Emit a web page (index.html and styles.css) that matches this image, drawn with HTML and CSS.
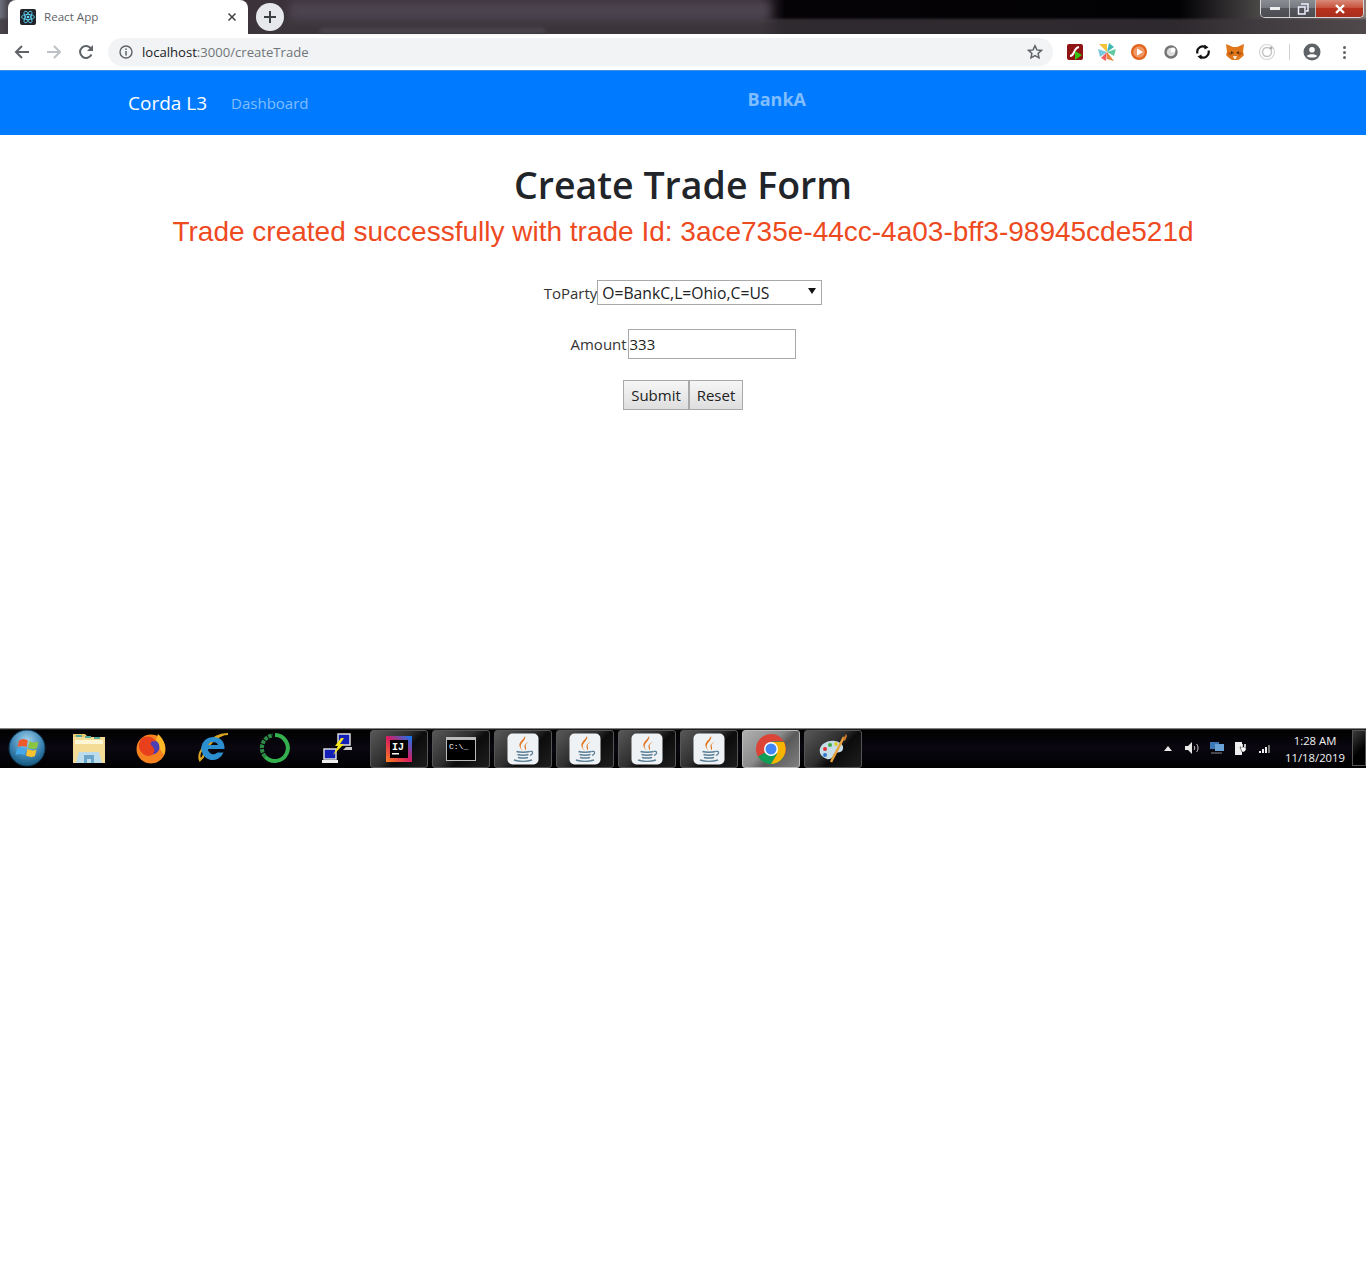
FILE: index.html
```html
<!DOCTYPE html>
<html>
<head>
    <title>React App</title>
    <link rel="stylesheet" href="styles.css">
</head>
<body>
    <svg class="defs" width="0" height="0">
        <symbol id="java" viewBox="0 0 32 32">
            <rect x=".5" y=".5" width="31" height="31" rx="5" fill="#eef2f5"/>
            <path d="M18 3c2 4-6 7-4 12 .6 1.300 1.500 2.500 2 3-3-3-5-6-2.500-9C15 7 17 5.500 18 3z" fill="#e2731c"/>
            <path d="M22 8.500c-3 1.500-5 3-4.500 5.500.3 1.300 1 2 .8 3.500 2-2-.5-4.500.5-6 .6-1 2-2 3.200-3z" fill="#e2731c"/>
            <path d="M9.500 18.500c3 1 10 1 13 0M10.500 21.500c3 .8 8 .8 11 0M11 24.500c3 .7 7 .7 10 0" fill="none" stroke="#5a7f96" stroke-width="1.500"/>
            <path d="M22.500 18.500c3.500-1 4.500 2 .5 4" fill="none" stroke="#5a7f96" stroke-width="1.200"/>
            <path d="M7 27c5 1.800 13 1.800 18 0" fill="none" stroke="#5a7f96" stroke-width="1.400"/>
        </symbol>
    </svg>

    <header class="chrome">
        <div class="tabstrip">
            <div class="blur-title"></div>
            <div class="blur-menu"></div>
            <div class="tab">
                <svg class="favicon" width="16" height="16" viewBox="0 0 16 16">
                    <rect width="16" height="16" rx="2" fill="#20232a"/>
                    <g fill="none" stroke="#61dafb" stroke-width=".8">
                        <ellipse cx="8" cy="8" rx="6.500" ry="2.600"/>
                        <ellipse cx="8" cy="8" rx="6.500" ry="2.600" transform="rotate(60 8 8)"/>
                        <ellipse cx="8" cy="8" rx="6.500" ry="2.600" transform="rotate(120 8 8)"/>
                    </g>
                    <circle cx="8" cy="8" r="1.300" fill="#61dafb"/>
                </svg>
                <span class="tab-title">React App</span>
                <svg class="tab-close" width="10" height="10" viewBox="0 0 10 10">
                    <path d="M1.500 1.500l7 7M8.500 1.500l-7 7" stroke="#3c4043" stroke-width="1.500"/>
                </svg>
            </div>
            <div class="new-tab">
                <svg width="14" height="14" viewBox="0 0 14 14">
                    <path d="M7 1v12M1 7h12" stroke="#3c4043" stroke-width="2"/>
                </svg>
            </div>
            <div class="win-controls">
                <div class="win-btn win-min"><span></span></div>
                <div class="win-btn win-max"><svg width="12" height="12" viewBox="0 0 12 12"><path d="M4 1h7v7H9M1.500 4h6.500v7H1.500z" fill="none" stroke="#eef" stroke-width="1.500"/></svg></div>
                <div class="win-btn win-close"><svg width="12" height="10" viewBox="0 0 12 10"><path d="M2 1l8 8M10 1l-8 8" stroke="#fff" stroke-width="2.400"/></svg></div>
            </div>
        </div>

        <div class="toolbar">
            <div class="nav-btns">
                <svg width="16" height="16" viewBox="0 0 16 16"><path d="M15 8H2M8 2L2 8l6 6" fill="none" stroke="#5f6368" stroke-width="2"/></svg>
                <svg width="16" height="16" viewBox="0 0 16 16"><path d="M1 8h13M8 2l6 6-6 6" fill="none" stroke="#bdc1c6" stroke-width="2"/></svg>
                <svg width="16" height="16" viewBox="0 0 16 16"><path d="M13.500 10.500A6 6 0 1 1 13 4.500" fill="none" stroke="#5f6368" stroke-width="2"/><path d="M15 1v6H9z" fill="#5f6368"/></svg>
            </div>
            <div class="omnibox">
                <svg width="14" height="14" viewBox="0 0 14 14">
                    <circle cx="7" cy="7" r="6" fill="none" stroke="#5f6368" stroke-width="1.400"/>
                    <path d="M7 6v4.500M7 3.500v1.500" stroke="#5f6368" stroke-width="1.500"/>
                </svg>
                <span class="url"><span class="url-host">localhost</span>:3000/createTrade</span>
                <svg class="star" width="16" height="16" viewBox="0 0 16 16">
                    <path d="M8 1.800l1.900 4.100 4.500.5-3.300 3 .9 4.500L8 11.700l-4 2.200.9-4.500-3.300-3 4.500-.5z" fill="none" stroke="#5f6368" stroke-width="1.500"/>
                </svg>
            </div>
            <div class="extensions">
                <svg width="16" height="16" viewBox="0 0 16 16">
                    <rect width="16" height="16" rx="2" fill="#8f1414"/>
                    <path d="M3 12c5 0 3-8 9-9" fill="none" stroke="#fff" stroke-width="2"/>
                    <path d="M8 7l7 4-7 5z" fill="#35c211"/>
                </svg>
                <svg width="18" height="18" viewBox="0 0 18 18">
                    <path d="M9 9L1 1h8z" fill="#f5c33b"/>
                    <path d="M9 9l2-9 5 4z" fill="#3fb6b8"/>
                    <path d="M9 9l9-3-2 7z" fill="#62c9a0"/>
                    <path d="M9 9l7 9-7-2z" fill="#e8833a"/>
                    <path d="M9 9l-1 9-5-3z" fill="#ef5f5f"/>
                    <path d="M9 9L0 6l2 8z" fill="#7ac7e0"/>
                </svg>
                <svg width="16" height="16" viewBox="0 0 16 16">
                    <circle cx="8" cy="8" r="8" fill="#e2621b"/>
                    <circle cx="8" cy="8" r="5.800" fill="#ef9a66"/>
                    <path d="M6 4.500l6 3.500-6 3.500z" fill="#fff"/>
                </svg>
                <svg width="14" height="14" viewBox="0 0 14 14">
                    <circle cx="7" cy="7" r="5.500" fill="#ddd" stroke="#757575" stroke-width="2.500"/>
                    <circle cx="9" cy="5" r="2.500" fill="#fff"/>
                </svg>
                <svg width="16" height="16" viewBox="0 0 16 16">
                    <path d="M2.500 9.500A5.500 5.500 0 0 1 11 3.500M13.500 6.500A5.500 5.500 0 0 1 5 12.500" fill="none" stroke="#111" stroke-width="2.200"/>
                    <path d="M9.500.500l4 3-4 2zM6.500 15.500l-4-3 4-2z" fill="#111"/>
                </svg>
                <svg width="18" height="16" viewBox="0 0 18 16">
                    <path d="M0 0l7 3h4l7-3-1 8 1 3-3 3-3 2H6l-3-2-3-3 1-3z" fill="#e2761b"/>
                    <path d="M1 9l5-1-1 4zM17 9l-5-1 1 4z" fill="#c05a12"/>
                    <path d="M5 7l3 2-3 1zM13 7l-3 2 3 1z" fill="#4a2f14"/>
                    <path d="M7 12h4l-1 3H8z" fill="#f5e3cf"/>
                </svg>
                <svg width="18" height="18" viewBox="0 0 18 18">
                    <circle cx="9" cy="9" r="7.500" fill="none" stroke="#d5d5d5" stroke-width="1.200"/>
                    <circle cx="9" cy="9" r="4.500" fill="none" stroke="#c4c4c4" stroke-width="1.500"/>
                    <circle cx="13" cy="5" r="1.500" fill="#aaa"/>
                </svg>
            </div>
            <div class="toolbar-sep"></div>
            <svg class="profile" width="18" height="18" viewBox="0 0 18 18">
                <circle cx="9" cy="9" r="8.500" fill="#5f6368"/>
                <circle cx="9" cy="6.800" r="2.800" fill="#fff"/>
                <path d="M3.800 13c1.500-2.500 8.900-2.500 10.400 0-1.500 2-8.900 2-10.400 0z" fill="#fff"/>
            </svg>
            <div class="menu-dots"><span></span><span></span><span></span></div>
        </div>
    </header>

    <nav class="navbar">
        <a class="brand">Corda L3</a>
        <a class="nav-link">Dashboard</a>
        <span class="bank-name">BankA</span>
    </nav>

    <main class="content">
        <h1 class="page-title">Create Trade Form</h1>
        <p class="message">Trade created successfully with trade Id: 3ace735e-44cc-4a03-bff3-98945cde521d</p>
        <form class="trade-form">
            <div class="form-row select-row">
                <label>ToParty</label>
                <div class="select-wrap">
                    <select class="party-select">
                        <option>O=BankC,L=Ohio,C=US</option>
                    </select>
                </div>
            </div>
            <div class="form-row">
                <label class="amount-label">Amount</label>
                <input class="amount-input" type="text" value="333">
            </div>
            <div class="form-row">
                <button type="button" class="form-btn btn-submit">Submit</button>
                <button type="button" class="form-btn btn-reset">Reset</button>
            </div>
        </form>
    </main>

    <footer class="taskbar">
        <div class="start">
            <svg width="38" height="38" viewBox="0 0 38 38">
                <defs>
                    <radialGradient id="orb" cx="50%" cy="30%" r="70%">
                        <stop offset="0" stop-color="#a5d4ee"/>
                        <stop offset=".6" stop-color="#3d85b4"/>
                        <stop offset="1" stop-color="#16587e"/>
                    </radialGradient>
                </defs>
                <circle cx="19" cy="19" r="18" fill="url(#orb)" stroke="#0d3a58"/>
                <g transform="translate(3 -.5)">
                    <path d="M8 12c3-2 6-2 9 0l-1.500 6.500c-3-1.500-6-1.500-9 0z" fill="#ee5a2c"/>
                    <path d="M18.500 12.500c3 2 6 2 9 .5l-1.500 6.500c-3 1.500-6 1-9-.5z" fill="#8cc63f"/>
                    <path d="M6 20c3-1.500 6-1.500 9 0l-1.500 6.500c-3-1.500-6-1.500-9 0z" fill="#45a8e8"/>
                    <path d="M16.500 20.500c3 1.500 6 2 9 .5L24 27.500c-3 1.500-6 1-9-.5z" fill="#f9c22e"/>
                </g>
            </svg>
        </div>
        <div class="pinned">
            <svg width="34" height="32" viewBox="0 0 34 32">
                <path d="M1 5h32v26H1z" fill="#f4dc96"/>
                <path d="M1 2h12l3 3H1z" fill="#e8c76f"/>
                <path d="M4 4h6M13 5h6M22 6h6" stroke="#5a9" stroke-width="2"/>
                <path d="M3 8h28v4H3z" fill="#fff6d5"/>
                <path d="M7 20h20l3 11H4z" fill="#bcdcec"/>
                <path d="M12 23h10v8h-3v-4h-4v4h-3z" fill="#6aa6cc"/>
            </svg>
        </div>
        <div class="pinned">
            <svg width="32" height="32" viewBox="0 0 32 32">
                <circle cx="16" cy="17" r="14.500" fill="#f5821f"/>
                <path d="M23 2c6 5 9 13 6 21-3-4-5-9-9-12z" fill="#fdb827"/>
                <circle cx="17" cy="15" r="7.500" fill="#4a3fb5"/>
                <path d="M6 7c5-4 12-3 15 3-4-2-7 1-4 4 4 3 3 9-3 10-6 0-11-6-10-12z" fill="#e8401d"/>
            </svg>
        </div>
        <div class="pinned">
            <svg width="34" height="34" viewBox="0 0 34 34">
                <path d="M4 29C0 20 16 3 32 3c-6 0-20 6-25 23z" fill="none" stroke="#d9a520" stroke-width="2.200"/>
                <path d="M17 6a11.500 11.500 0 1 0 10.500 15.500h-6a5.500 5.500 0 0 1-9.500-3.500h16.500C29 10 24 6 17 6zm-5 8c1-4 9-4 10 0z" fill="#2b8fd0" fill-rule="evenodd"/>
            </svg>
        </div>
        <div class="pinned">
            <svg width="32" height="32" viewBox="0 0 32 32">
                <path d="M16 3a13 13 0 1 1-10 21.500" fill="none" stroke="#35b04f" stroke-width="4"/>
                <path d="M6 24.500A13 13 0 0 1 14 3.200" fill="none" stroke="#2e8b46" stroke-width="4" stroke-dasharray="3.500 1"/>
            </svg>
        </div>
        <div class="pinned">
            <svg width="32" height="32" viewBox="0 0 32 32">
                <path d="M17 2h12v11H17z" fill="#1320b8" stroke="#ddd" stroke-width="1.500"/>
                <path d="M25 15h6v3h-9z" fill="#ccc"/>
                <path d="M3 17h12v10H3z" fill="#1320b8" stroke="#ddd" stroke-width="1.500"/>
                <path d="M1 28h16v3H1z" fill="#eee"/>
                <path d="M20 6l-6 8h3l-5 9 11-11h-4l4-6z" fill="#f8e71c"/>
            </svg>
        </div>
        <div class="task-btn">
            <svg width="26" height="26" viewBox="0 0 26 26">
                <defs>
                    <linearGradient id="ij" x1="0" y1="1" x2="1" y2="0">
                        <stop offset="0" stop-color="#fc801d"/>
                        <stop offset=".5" stop-color="#d81b60"/>
                        <stop offset="1" stop-color="#087cfa"/>
                    </linearGradient>
                </defs>
                <rect width="26" height="26" fill="url(#ij)"/>
                <rect x="4" y="4" width="18" height="18" fill="#000"/>
                <text x="6" y="14" class="ij-text">IJ</text>
                <rect x="6" y="17" width="7" height="1.500" fill="#fff"/>
            </svg>
        </div>
        <div class="task-btn">
            <div class="cmd-icon"><span class="cmd-text">C:\_</span></div>
        </div>
        <div class="task-btn"><svg width="32" height="32"><use href="#java"/></svg></div>
        <div class="task-btn"><svg width="32" height="32"><use href="#java"/></svg></div>
        <div class="task-btn"><svg width="32" height="32"><use href="#java"/></svg></div>
        <div class="task-btn"><svg width="32" height="32"><use href="#java"/></svg></div>
        <div class="task-btn task-active">
            <svg width="30" height="30" viewBox="0 0 30 30">
                <circle cx="15" cy="15" r="15" fill="#db4437"/>
                <path d="M15 15L2 22.500A15 15 0 0 0 15 30z" fill="#0f9d58"/>
                <path d="M15 15l-3 15A15 15 0 0 0 28 22.500L27.900 7.500H15z" fill="#0f9d58"/>
                <path d="M15 8h12.900A15 15 0 0 1 15 30l6-10z" fill="#f4b400"/>
                <circle cx="15" cy="15" r="7" fill="#fff"/>
                <circle cx="15" cy="15" r="5.500" fill="#4285f4"/>
            </svg>
        </div>
        <div class="task-btn">
            <svg width="32" height="32" viewBox="0 0 32 32">
                <path d="M3 20C1 12 10 7 18 8c7 1 10 6 7 10-2 2-6 1-8 3-1 3-3 6-7 5-3-1-6-3-7-6z" fill="#c4dde8"/>
                <circle cx="8" cy="16" r="2" fill="#d33"/>
                <circle cx="13" cy="12" r="2" fill="#4a4"/>
                <circle cx="19" cy="11" r="2" fill="#dc3"/>
                <circle cx="8" cy="22" r="2" fill="#37c"/>
                <path d="M14 29L27 4" stroke="#e8a33d" stroke-width="2.500"/>
                <path d="M26 6l3-5 1 2-2 5z" fill="#c9772a"/>
            </svg>
        </div>
        <div class="tray">
            <div class="tray-icon"><svg width="8" height="5" viewBox="0 0 8 5"><path d="M4 0l4 5H0z" fill="#e8e8e8"/></svg></div>
            <div class="tray-icon"><svg width="16" height="14" viewBox="0 0 16 14">
                <path d="M1 5h3l4-4v12L4 9H1z" fill="#e8e8e8"/>
                <path d="M10 5c1 1 1 3 0 4M12.500 3c2 2 2 6 0 8" fill="none" stroke="#ccc"/>
            </svg></div>
            <div class="tray-icon"><svg width="16" height="14" viewBox="0 0 16 14">
                <rect x="1" y="1" width="9" height="7" fill="#3a78b8"/>
                <rect x="6" y="3" width="9" height="7" fill="#6aa2d8"/>
                <path d="M2 12h11" stroke="#888"/>
            </svg></div>
            <div class="tray-icon"><svg width="14" height="16" viewBox="0 0 14 16">
                <path d="M1 2h7v13H1z" fill="#eee"/>
                <path d="M6 7h6v3l-2 2H8z" fill="#fff" stroke="#222" stroke-width=".6"/>
                <path d="M8 4v3M11 4v3" stroke="#fff" stroke-width="1.500"/>
            </svg></div>
            <div class="tray-icon"><svg width="13" height="9" viewBox="0 0 13 9">
                <path d="M0 7h2v2H0zM3 5h2v4H3zM6 3h2v6H6z" fill="#f0f0f0"/>
                <path d="M9 1h2v8H9z" fill="#777"/>
            </svg></div>
            <div class="clock">
                <span>1:28 AM</span>
                <span>11/18/2019</span>
            </div>
            <div class="show-desktop"></div>
        </div>
    </footer>
</body>
</html>
```

FILE: styles.css
```css
* { box-sizing: border-box; }

html, body {
    margin: 0;
    background: #fff;
}

body {
    height: 1268px;
    overflow: hidden;
    font-family: "Open Sans", "Noto Sans", sans-serif;
    color: #212529;
}

.defs { display: block; height: 0; }

/* browser frame */
.tabstrip {
    height: 34px;
    display: flex;
    align-items: flex-end;
    position: relative;
    padding-left: 8px;
    background:
        linear-gradient(rgba(60, 55, 60, 0) 50%, rgba(60, 55, 60, .75) 60%),
        linear-gradient(90deg, #6c6f7a 0, #4a4650 8px, #3b323a 250px, #3b323a 760px, #050306 785px, #020104 1180px, #4b4848 1260px, #8a7d7a 1366px);
}

.blur-title {
    position: absolute;
    left: 290px;
    top: 2px;
    width: 480px;
    height: 18px;
    background: #4c4450;
    filter: blur(4px);
}

.blur-menu {
    position: absolute;
    left: 320px;
    top: 29px;
    width: 225px;
    height: 3px;
    background: #6e6874;
    opacity: .5;
    filter: blur(2px);
}

.tab {
    width: 240px;
    height: 34px;
    background: #fff;
    border-radius: 8px 8px 0 0;
    display: flex;
    align-items: center;
    padding-left: 12px;
    position: relative;
}

.tab-title {
    margin: 0 0 2px 8px;
    font-size: 11.6px;
    color: #5f6368;
    flex: 1;
}

.tab-close { margin-right: 11px; }

.new-tab {
    width: 28px;
    height: 28px;
    margin: 0 0 3px 8px;
    border-radius: 50%;
    background: #e6e8ec;
    display: flex;
    align-items: center;
    justify-content: center;
    position: relative;
}

.win-controls {
    position: absolute;
    top: 0;
    right: 2px;
    width: 104px;
    height: 18px;
    display: flex;
    border: 1px solid #d8d8d8;
    border-top: 0;
    border-radius: 0 0 5px 5px;
    overflow: hidden;
}

.win-btn {
    display: flex;
    align-items: center;
    justify-content: center;
    border-right: 1px solid #bbb;
    background: linear-gradient(#8a8d92 0, #777a80 45%, #54565c 50%, #4a4c52 100%);
}

.win-min { width: 29px; }
.win-min span { width: 10px; height: 3px; background: #eee; }
.win-max { width: 26px; }
.win-close {
    flex: 1;
    border-right: 0;
    background: linear-gradient(#d88a78 0, #c8533d 45%, #b8321d 50%, #a82e1e 100%);
}

.toolbar {
    height: 36px;
    background: #fff;
    display: flex;
    align-items: center;
}

.nav-btns {
    width: 108px;
    display: flex;
    gap: 16px;
    padding-left: 14px;
}

.omnibox {
    width: 945px;
    height: 28px;
    border-radius: 14px;
    background: #f1f3f4;
    display: flex;
    align-items: center;
    padding: 0 10px 0 11px;
}

.url {
    margin-left: 9px;
    font-size: 13.1px;
    color: #70757a;
    flex: 1;
}

.url-host { color: #202124; }

.extensions {
    width: 230px;
    margin-left: 6px;
    display: grid;
    grid-template-columns: repeat(7, 32px);
    justify-items: center;
    align-items: center;
}

.toolbar-sep {
    width: 1px;
    height: 16px;
    background: #cdd0d4;
}

.profile { margin-left: 13px; }

.menu-dots {
    margin-left: 22px;
    display: flex;
    flex-direction: column;
    gap: 2px;
}

.menu-dots span {
    width: 3px;
    height: 3px;
    border-radius: 50%;
    background: #5f6368;
}

/* app navbar */
.navbar {
    height: 65px;
    background: #007bff;
    border-top: 1px solid #3b8fe8;
    display: flex;
    align-items: center;
    padding: 0 560px 0 128px;
}

.brand {
    color: #fff;
    font-size: 19px;
}

.nav-link {
    margin-left: 24px;
    color: rgba(255, 255, 255, .5);
    font-size: 15px;
}

.bank-name {
    margin-left: auto;
    margin-bottom: 8px;
    color: rgba(255, 255, 255, .5);
    font-size: 18px;
    font-weight: 700;
}

/* form */
.content {
    height: 593px;
    text-align: center;
    padding-top: 22px;
}

.page-title {
    margin: 0 0 1px;
    font-size: 37.5px;
    line-height: 55px;
    font-weight: 600;
}

.message {
    margin: 0;
    font-family: "Liberation Sans", Arial, sans-serif;
    font-size: 28px;
    line-height: 38px;
    color: #ee4a1f;
}

.trade-form {
    margin-top: 29px;
    font-size: 15px;
}

.form-row {
    display: flex;
    justify-content: center;
    align-items: center;
    margin-bottom: 21px;
    height: 30px;
}

.select-row {
    height: 25px;
    margin-bottom: 24px;
}

.form-row label { color: #333; }
.amount-label { width: 57px; text-align: left; }

.select-wrap {
    position: relative;
    height: 25px;
}

.select-wrap::after {
    content: "";
    position: absolute;
    right: 6px;
    top: 8px;
    border: 4px solid transparent;
    border-top: 6px solid #111;
    border-bottom: 0;
}

.party-select {
    appearance: none;
    width: 225px;
    height: 25px;
    padding: 0 4px;
    border: 1px solid #a9a9a9;
    border-radius: 0;
    background: #fff;
    font: inherit;
    font-size: 15.7px;
    color: #222;
}

.amount-input {
    width: 168px;
    height: 30px;
    padding: 0 1px;
    border: 1px solid #a9a9a9;
    font: inherit;
    color: #222;
}

.form-btn {
    height: 30px;
    padding: 0;
    border: 1px solid #a9a9a9;
    background: linear-gradient(#f6f6f6, #dedede);
    font: inherit;
    color: #222;
}

.btn-submit { width: 66px; }
.btn-reset { width: 54px; }

/* windows taskbar */
.taskbar {
    height: 40px;
    display: flex;
    align-items: center;
    gap: 4px;
    background: linear-gradient(#c8c8c8 0, #3a3a3a 1px, #000 2px, #0a0710 50%, #000 100%);
}

.start {
    width: 56px;
    display: flex;
    justify-content: flex-start;
    padding-left: 8px;
}

.pinned {
    width: 58px;
    height: 38px;
    display: flex;
    align-items: center;
    justify-content: center;
}

.task-btn {
    width: 58px;
    height: 38px;
    margin-top: 1px;
    display: flex;
    align-items: center;
    justify-content: center;
    border: 1px solid #555;
    border-radius: 3px;
    background: linear-gradient(135deg, #585858 0, #2e2e2e 45%, #0c0c0c 60%, #1e1e1e 100%);
}

.task-active {
    background: linear-gradient(135deg, #b0b0b0 0, #8a8a8a 45%, #5a5a5a 60%, #808080 100%);
    border-color: #bbb;
}

.ij-text {
    font-family: "Liberation Mono", monospace;
    font-size: 10px;
    font-weight: bold;
    fill: #fff;
}

.cmd-icon {
    width: 30px;
    height: 24px;
    background: #000;
    border: 1px solid #bbb;
    border-top-width: 3px;
    padding-left: 2px;
    line-height: 14px;
}

.cmd-text {
    display: block;
    font-family: "Liberation Mono", monospace;
    font-size: 8px;
    color: #fff;
    text-align: left;
}

.tray {
    margin-left: auto;
    height: 100%;
    display: flex;
    align-items: center;
}

.tray-icon {
    width: 24.5px;
    display: flex;
    justify-content: center;
}

.clock {
    width: 74px;
    display: flex;
    flex-direction: column;
    align-items: center;
    padding-top: 2px;
    font-size: 11.3px;
    line-height: 17px;
    color: #f2f2f2;
}

.show-desktop {
    width: 14px;
    height: 36px;
    border: 1px solid #555;
    background: linear-gradient(135deg, #3c3c3c, #000 60%);
}
```
